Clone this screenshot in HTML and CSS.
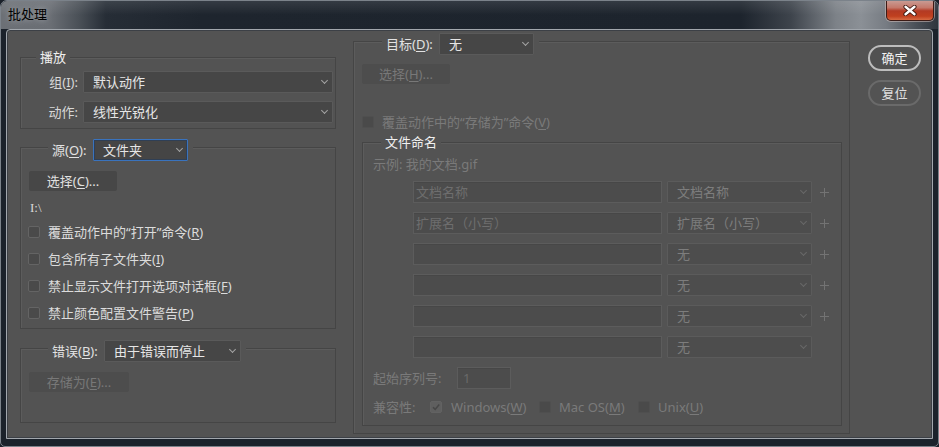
FILE: index.html
```html
<!DOCTYPE html>
<html lang="zh-CN">
<head>
<meta charset="utf-8">
<title>批处理</title>
<link rel="stylesheet" href="styles.css">
</head>
<body>
<div class="window">
  <div class="titlebar">
    <span class="title">批处理</span>
    <div class="close">
      <svg width="14" height="11" viewBox="0 0 14 11"><path d="M2.5 1.8 L11.5 9.2 M11.5 1.8 L2.5 9.2" stroke="#3a140c" stroke-width="4.2" stroke-linecap="round"/><path d="M2.5 1.8 L11.5 9.2 M11.5 1.8 L2.5 9.2" stroke="#ffffff" stroke-width="2.4" stroke-linecap="round"/></svg>
    </div>
  </div>
  <div class="client">
    <div class="col-left">
      <section class="gb gb-play">
        <div class="gb-head gb-head-text head-play"><span class="gb-title">播放</span></div>
        <div class="frow frow-first"><span class="flabel">组(<u>I</u>):</span><div class="dd dd-wide">默认动作</div></div>
        <div class="frow"><span class="flabel">动作:</span><div class="dd dd-wide">线性光锐化</div></div>
      </section>

      <section class="gb gb-src">
        <div class="gb-head head-sel"><div class="gb-head-inner">
          <span class="hlabel hl-src">源(<u>O</u>):</span><div class="dd dd-focus dd-src">文件夹</div>
        </div></div>
        <button class="btn btn-src">选择(<u>C</u>)...</button>
        <div class="path">I:\</div>
        <div class="chk-list">
          <div class="chk-row"><span class="cb"></span><span>覆盖动作中的“打开”命令(<u>R</u>)</span></div>
          <div class="chk-row"><span class="cb"></span><span>包含所有子文件夹(<u>I</u>)</span></div>
          <div class="chk-row"><span class="cb"></span><span>禁止显示文件打开选项对话框(<u>F</u>)</span></div>
          <div class="chk-row"><span class="cb"></span><span>禁止颜色配置文件警告(<u>P</u>)</span></div>
        </div>
      </section>

      <section class="gb gb-err">
        <div class="gb-head head-sel"><div class="gb-head-inner">
          <span class="hlabel hl-err">错误(<u>B</u>):</span><div class="dd dd-err">由于错误而停止</div>
        </div></div>
        <button class="btn btn-dis btn-save">存储为(<u>E</u>)...</button>
      </section>
    </div>

    <section class="gb gb-target">
      <div class="gb-head head-sel head-target"><div class="gb-head-inner">
        <span class="hlabel hl-target">目标(<u>D</u>):</span><div class="dd dd-src">无</div>
      </div></div>
      <button class="btn btn-dis btn-selh">选择(<u>H</u>)...</button>
      <div class="chk-row chk-save dis"><span class="cb cb-dis"></span><span>覆盖动作中的“存储为”命令(<u>V</u>)</span></div>

      <section class="gb gb-naming">
        <div class="gb-head gb-head-text head-naming"><span class="gb-title">文件命名</span></div>
        <div class="example dis">示例: 我的文档.gif</div>
        <div class="nrows">
          <div class="nrow"><div class="field">文档名称</div><div class="dd dd-dis">文档名称</div><span class="plus"></span></div>
          <div class="nrow"><div class="field">扩展名（小写）</div><div class="dd dd-dis">扩展名（小写）</div><span class="plus"></span></div>
          <div class="nrow"><div class="field"></div><div class="dd dd-dis">无</div><span class="plus"></span></div>
          <div class="nrow"><div class="field"></div><div class="dd dd-dis">无</div><span class="plus"></span></div>
          <div class="nrow"><div class="field"></div><div class="dd dd-dis">无</div><span class="plus"></span></div>
          <div class="nrow"><div class="field"></div><div class="dd dd-dis">无</div></div>
        </div>
        <div class="seq-row dis"><span class="seq-label">起始序列号:</span><div class="field field-seq">1</div></div>
        <div class="compat-row dis">
          <span class="compat-label">兼容性:</span>
          <span class="cb cb-dis cb-checked"><svg width="10" height="10" viewBox="0 0 10 10"><path d="M2 5.2 L4.2 7.4 L8.2 2.6" fill="none" stroke="#474747" stroke-width="1.6"/></svg></span>
          <span class="os os-win">Windows(<u>W</u>)</span>
          <span class="cb cb-dis"></span>
          <span class="os os-mac">Mac OS(<u>M</u>)</span>
          <span class="cb cb-dis"></span>
          <span class="os">Unix(<u>U</u>)</span>
        </div>
      </section>
    </section>

    <div class="side">
      <button class="pill pill-ok">确定</button>
      <button class="pill pill-reset">复位</button>
    </div>
  </div>
</div>
</body>
</html>
```

FILE: styles.css
```css
* { box-sizing: border-box; }
html, body { margin: 0; padding: 0; }
body {
  width: 939px;
  height: 447px;
  overflow: hidden;
  background: #1a2029;
  font-family: "Noto Sans", "Noto Sans CJK SC", sans-serif;
  font-size: 13px;
  line-height: 16px;
  color: #dcdcdc;
}
u { text-decoration: underline; text-underline-offset: 2px; text-decoration-thickness: 1px; }

.window {
  width: 939px;
  height: 447px;
  border: 1px solid #7b828a;
  border-radius: 7px 7px 5px 5px;
  background: #1b222b;
  display: flex;
  flex-direction: column;
  overflow: hidden;
}

.titlebar {
  height: 28px;
  flex: none;
  display: flex;
  align-items: flex-start;
  background:
    linear-gradient(180deg, rgba(255,255,255,0.10) 0, rgba(255,255,255,0) 14px),
    linear-gradient(90deg, #6c7076 0, #6a6e74 50px, #4a5057 78px, #262d36 105px, #1e252e 200px, #1d242d 740px, #3e444c 790px, #7d8288 835px, #8b9096 860px, #777c83 885px, #4a5058 915px, #2c323a 939px);
}
.title {
  color: #000;
  margin: 5px 0 0 7px;
  text-shadow: 0 0 6px rgba(220,225,230,0.6);
}
.close {
  margin-left: auto;
  margin-right: 4px;
  width: 48px;
  height: 20px;
  border: 1px solid #3c1b16;
  border-top: none;
  border-radius: 0 0 5px 5px;
  box-shadow: 0 0 0 1px rgba(210,190,185,0.55);
  background: linear-gradient(180deg, #c99a92 0, #c4786a 35%, #b33a24 52%, #c0401f 80%, #d66a42 100%);
  display: flex;
  align-items: center;
  justify-content: center;
}

.client {
  height: 410px;
  margin: 0 5px;
  border: 1px solid #a2a7ad;
  border-radius: 4px 4px 0 0;
  background: #535353;
  box-shadow: inset 0 0 0 1px #3c4046;
  display: flex;
  align-items: flex-start;
  padding-left: 13px;
}

/* group boxes */
.gb {
  border: 1px solid #454545;
  box-shadow: inset 1px 1px 0 #5c5c5c;
}
.gb-head { display: flex; margin-top: -9px; }
.gb-head-text .gb-title {
  background: #535353;
  padding: 0 4px;
  color: #efefef;
  line-height: 16px;
}
.gb-head-inner {
  display: flex;
  align-items: center;
  background: #535353;
  padding: 0 5px 0 4px;
  margin-left: 27px;
}
.head-play { margin-left: 15px; }
.head-naming { margin-left: 18px; }
.head-target .gb-head-inner { margin-left: 28px; }
.hlabel { white-space: nowrap; color: #e2e2e2; }
.hl-src { width: 36px; }
.hl-err { width: 47px; }
.hl-target { width: 48px; }

.col-left { width: 316px; flex: none; }
.gb-play { margin-top: 27px; padding-bottom: 5px; }
.gb-src { margin-top: 18px; padding-bottom: 2px; }
.gb-err { margin-top: 19px; padding-bottom: 30px; }

.frow { display: flex; align-items: center; margin-top: 8px; }
.frow-first { margin-top: 6px; }
.flabel { width: 57px; margin-right: 5px; text-align: right; white-space: nowrap; color: #d8d8d8; }

/* dropdowns */
.dd {
  height: 22px;
  flex: none;
  display: flex;
  align-items: center;
  padding: 0 5px 0 9px;
  background: #464646;
  border: 1px solid #5a5a5a;
  border-radius: 1px;
  color: #e6e6e6;
  white-space: nowrap;
}
.dd::after {
  content: "";
  width: 4px;
  height: 4px;
  margin-left: auto;
  margin-top: -3px;
  border-right: 1px solid #a4a4a4;
  border-bottom: 1px solid #a4a4a4;
  transform: rotate(45deg);
}
.dd-wide { width: 250px; }
.dd-src { width: 95px; margin-left: 5px; }
.dd-err { width: 137px; margin-left: 5px; }
.dd-focus { border-color: #3a73bd; box-shadow: inset 0 0 0 1px #2f3f55; background: #454545; }
.dd-dis {
  width: 145px;
  margin-left: 5px;
  background: #4d4d4d;
  border-color: #5b5b5b;
  color: #7d7d7d;
}
.dd-dis::after { border-color: #686868; }

/* buttons */
.btn {
  display: block;
  height: 20px;
  padding: 0;
  border: none;
  border-radius: 2px;
  background: #474747;
  color: #e0e0e0;
  font: inherit;
  line-height: 20px;
  text-align: center;
}
.btn-dis { background: #4d4d4d; color: #787878; }
.btn-src { width: 88px; margin: 10px 0 0 8px; }
.btn-save { width: 100px; margin: 10px 0 0 8px; }
.btn-selh { width: 88px; margin: 9px 0 0 8px; }

.path { margin: 9px 0 0 9px; color: #d8d8d8; font-family: "Liberation Serif", serif; }
.chk-list { margin-top: 2px; }
.chk-row { display: flex; align-items: center; height: 27px; padding-left: 7px; white-space: nowrap; }
.chk-row .cb { margin-right: 8px; }

.cb {
  width: 12px;
  height: 12px;
  flex: none;
  border: 1px solid #646464;
  border-radius: 2px;
  background: #4a4a4a;
  display: flex;
  align-items: center;
  justify-content: center;
}
.cb-dis { border-color: #4f4f4f; background: #4a4a4a; }
.cb-checked { background: #5f5f5f; border-color: #626262; }

.dis { color: #7a7a7a; }

/* right panel */
.gb-target { width: 497px; flex: none; margin: 11px 0 0 17px; padding-bottom: 7px; }
.chk-save { height: 16px; margin-top: 30px; padding-left: 8px; }
.gb-naming { width: 480px; margin: 12px 0 0 8px; padding-bottom: 10px; }
.example { margin: 6px 0 0 10px; }
.nrows { margin: 9px 0 0 50px; display: flex; flex-direction: column; gap: 9px; }
.nrow { display: flex; align-items: center; height: 22px; }
.field {
  width: 249px;
  height: 22px;
  flex: none;
  padding-left: 2px;
  border: 1px solid #5c5c5c;
  background: #4c4c4c;
  box-shadow: inset 0 1px 0 #474747;
  color: #6e6e6e;
  line-height: 20px;
  white-space: nowrap;
}
.plus {
  width: 9px;
  height: 9px;
  margin-left: 8px;
  background:
    linear-gradient(#737373, #737373) center / 9px 1px no-repeat,
    linear-gradient(#737373, #737373) center / 1px 9px no-repeat;
}
.seq-row { display: flex; align-items: center; margin: 9px 0 0 10px; }
.seq-label { width: 84px; white-space: nowrap; }
.field-seq { width: 54px; padding-left: 5px; color: #6a6a6a; }
.compat-row { display: flex; align-items: center; height: 16px; margin: 10px 0 0 10px; white-space: nowrap; }
.compat-label { width: 57px; }
.os { margin-left: 9px; }
.os-win { width: 88px; }
.os-mac { width: 79px; margin-left: 8px; }
.os:last-child { margin-left: 8px; }

/* side buttons */
.side { width: 53px; flex: none; margin: 15px 0 0 18px; display: flex; flex-direction: column; gap: 9px; }
.pill {
  height: 26px;
  padding: 0;
  border: 2px solid #bdbdbd;
  border-radius: 13px;
  background: #515151;
  color: #f2f2f2;
  font: inherit;
  line-height: 20px;
}
.pill-reset { border-color: #6a6a6a; color: #e0e0e0; background: #535353; }
```
